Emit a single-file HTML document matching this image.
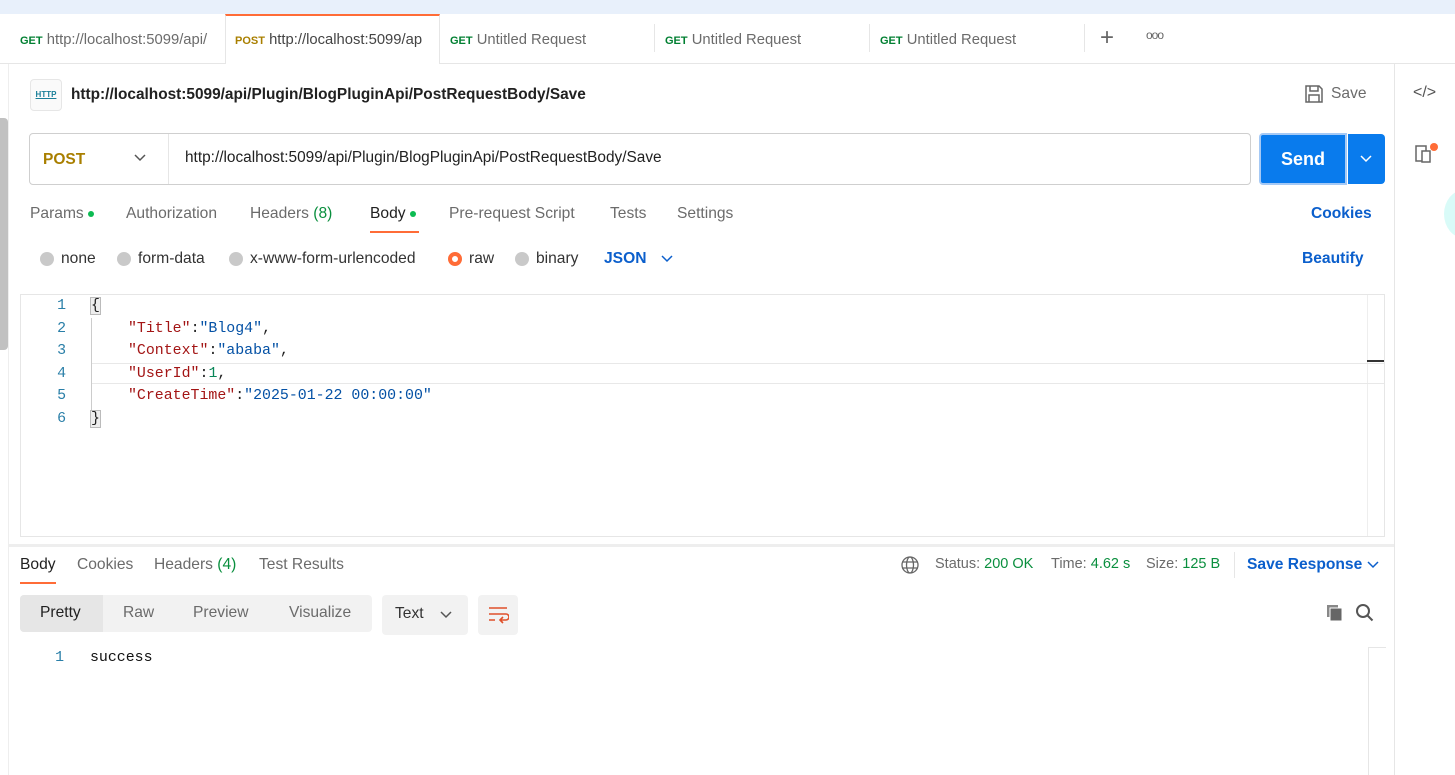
<!DOCTYPE html>
<html><head><style>
*{margin:0;padding:0;box-sizing:border-box}
body{width:1455px;height:775px;overflow:hidden;background:#fff;font-family:"Liberation Sans",sans-serif;font-size:14.5px;color:#212121;position:relative}
.a{position:absolute;white-space:nowrap}
.g{color:#6b6b6b}
.t{font-size:15.6px}
.mono{font-family:"Liberation Mono",monospace;font-size:14.9px}
.ln{color:#2a7fa8;width:20px;text-align:right}
.k{color:#a31515}.s{color:#0451a5}
.dot{display:inline-block;width:6px;height:6px;border-radius:50%;background:#0cbb52;margin-left:4px;vertical-align:middle}
.rad{position:absolute;width:14px;height:14px;border-radius:50%;background:#c9c9c9;top:252px}
</style></head><body>
<div class="a" style="left:0;top:0;width:1455px;height:14px;background:#e8f0fb"></div>
<div class="a" style="left:0;top:14px;width:1455px;height:50px;border-bottom:1px solid #e6e6e6"></div>
<div class="a" style="left:225px;top:14px;width:215px;height:50px;background:#fff;border-top:2px solid #ff6c37;border-left:1px solid #e6e6e6;border-right:1px solid #e6e6e6"></div>
<div class="a" style="left:20px;top:32px;font-size:14.8px"><span style="color:#007f31;font-size:11px;font-weight:bold">GET</span> <span class="g">http://localhost:5099/api/</span></div>
<div class="a" style="left:235px;top:32px;font-size:14.8px"><span style="color:#a97f00;font-size:11px;font-weight:bold">POST</span> <span style="color:#444">http://localhost:5099/ap</span></div>
<div class="a" style="left:450px;top:32px;font-size:14.8px"><span style="color:#007f31;font-size:11px;font-weight:bold">GET</span> <span class="g">Untitled Request</span></div>
<div class="a" style="left:654px;top:24px;width:1px;height:28px;background:#e6e6e6"></div>
<div class="a" style="left:665px;top:32px;font-size:14.8px"><span style="color:#007f31;font-size:11px;font-weight:bold">GET</span> <span class="g">Untitled Request</span></div>
<div class="a" style="left:869px;top:24px;width:1px;height:28px;background:#e6e6e6"></div>
<div class="a" style="left:880px;top:32px;font-size:14.8px"><span style="color:#007f31;font-size:11px;font-weight:bold">GET</span> <span class="g">Untitled Request</span></div>
<div class="a" style="left:1084px;top:24px;width:1px;height:28px;background:#e6e6e6"></div>
<div class="a" style="left:1100px;top:24px;font-size:24px;color:#666;line-height:28px">+</div>
<div class="a" style="left:1146px;top:28px;font-size:12px;color:#666;letter-spacing:-1px">ooo</div>
<div class="a" style="left:0;top:64px;width:9px;height:711px;border-right:1px solid #eee"></div>
<div class="a" style="left:0;top:118px;width:8px;height:232px;background:#c1c1c1;border-radius:0 4px 4px 0"></div>
<div class="a" style="left:1394px;top:64px;width:1px;height:711px;background:#e6e6e6"></div>
<div class="a" style="left:1413px;top:84px;color:#555;font-size:16px">&lt;/&gt;</div>
<svg class="a" style="left:1414px;top:143px" width="24" height="22"><rect x="2" y="3" width="10" height="15" fill="none" stroke="#666" stroke-width="1.5"/><rect x="8" y="8" width="8" height="11" fill="#fff" stroke="#666" stroke-width="1.5"/><circle cx="20" cy="4" r="4" fill="#ff6c37"/></svg>
<div class="a" style="left:1444px;top:190px;width:40px;height:48px;border-radius:50%;background:#d9fbf8"></div>
<div class="a" style="left:30px;top:79px;width:32px;height:32px;border:1px solid #e6e6e6;border-radius:4px;background:#fafafa;color:#1a7f99;font-size:8px;font-weight:bold;text-align:center;line-height:30px;text-decoration:underline">HTTP</div>
<div class="a" style="left:71px;top:86px;font-size:15.4px;font-weight:bold;color:#212121">http://localhost:5099/api/Plugin/BlogPluginApi/PostRequestBody/Save</div>
<svg class="a" style="left:1304px;top:84px" width="20" height="20"><path d="M2 2h13l3 3v13H2z M6 2v5h8V2 M5 18v-7h10v7" fill="none" stroke="#666" stroke-width="1.5"/></svg>
<div class="a g t" style="left:1331px;top:85px">Save</div>
<div class="a" style="left:29px;top:133px;width:1222px;height:52px;border:1px solid #cfcfcf;border-radius:4px"></div>
<div class="a" style="left:168px;top:134px;width:1px;height:50px;background:#e6e6e6"></div>
<div class="a" style="left:43px;top:151px;font-size:15.5px;font-weight:bold;color:#a97f00">POST</div>
<svg class="a" style="left:134px;top:154px" width="12" height="8"><path d="M1 1l5 5 5-5" fill="none" stroke="#555" stroke-width="1.5"/></svg>
<div class="a" style="left:185px;top:149px;font-size:15.4px;color:#212121">http://localhost:5099/api/Plugin/BlogPluginApi/PostRequestBody/Save</div>
<div class="a" style="left:1259px;top:133px;width:88px;height:52px;background:#097bed;border:2px solid #a5c9f5;border-radius:4px 0 0 4px;color:#fff;font-weight:bold;font-size:18px;text-align:center;line-height:48px">Send</div>
<div class="a" style="left:1348px;top:134px;width:37px;height:50px;background:#097bed;border-radius:0 4px 4px 0"></div>
<svg class="a" style="left:1360px;top:155px" width="12" height="8"><path d="M1 1l5 5 5-5" fill="none" stroke="#fff" stroke-width="1.5"/></svg>
<div class="a g t" style="left:30px;top:205px">Params<span class="dot"></span></div>
<div class="a g t" style="left:126px;top:205px">Authorization</div>
<div class="a g t" style="left:250px;top:205px">Headers <span style="color:#0a8f3e">(8)</span></div>
<div class="a t" style="left:370px;top:205px;color:#212121">Body<span class="dot"></span></div>
<div class="a" style="left:370px;top:231px;width:49px;height:2px;background:#ff6c37"></div>
<div class="a g t" style="left:449px;top:205px">Pre-request Script</div>
<div class="a g t" style="left:610px;top:205px">Tests</div>
<div class="a g t" style="left:677px;top:205px">Settings</div>
<div class="a t" style="left:1311px;top:205px;font-weight:bold;color:#0b5fcc">Cookies</div>
<div class="rad" style="left:40px"></div><div class="a t" style="left:61px;top:250px;color:#333">none</div>
<div class="rad" style="left:117px"></div><div class="a t" style="left:138px;top:250px;color:#333">form-data</div>
<div class="rad" style="left:229px"></div><div class="a t" style="left:250px;top:250px;color:#333">x-www-form-urlencoded</div>
<div class="rad" style="left:448px;background:#fff;border:4px solid #ff6c37"></div><div class="a t" style="left:469px;top:250px;color:#333">raw</div>
<div class="rad" style="left:515px"></div><div class="a t" style="left:536px;top:250px;color:#333">binary</div>
<div class="a t" style="left:604px;top:250px;font-weight:bold;color:#0b5fcc">JSON</div>
<svg class="a" style="left:661px;top:255px" width="12" height="8"><path d="M1 1l5 5 5-5" fill="none" stroke="#0b5fcc" stroke-width="1.5"/></svg>
<div class="a t" style="left:1302px;top:250px;font-weight:bold;color:#0b5fcc">Beautify</div>
<div class="a" style="left:20px;top:294px;width:1365px;height:243px;border:1px solid #e6e6e6"></div>
<div class="a" style="left:1367px;top:295px;width:1px;height:241px;background:#eee"></div>
<div class="a" style="left:1367px;top:360px;width:17px;height:2px;background:#333"></div>
<div class="a" style="left:91px;top:363px;width:1293px;height:21px;border-top:1px solid #e8e8e8;border-bottom:1px solid #e8e8e8"></div>
<div class="a" style="left:91px;top:318px;width:1px;height:92px;background:#ccc"></div>
<div class="a mono ln" style="left:46px;top:298px">1</div>
<div class="a mono ln" style="left:46px;top:321px">2</div>
<div class="a mono ln" style="left:46px;top:343px">3</div>
<div class="a mono ln" style="left:46px;top:366px">4</div>
<div class="a mono ln" style="left:46px;top:388px">5</div>
<div class="a mono ln" style="left:46px;top:411px">6</div>
<div class="a mono" style="left:91px;top:298px;background:#eee;outline:1px solid #bbb">{</div>
<div class="a mono" style="left:128px;top:321px"><span class="k">"Title"</span>:<span class="s">"Blog4"</span>,</div>
<div class="a mono" style="left:128px;top:343px"><span class="k">"Context"</span>:<span class="s">"ababa"</span>,</div>
<div class="a mono" style="left:128px;top:366px"><span class="k">"UserId"</span>:<span style="color:#098658">1</span>,</div>
<div class="a mono" style="left:128px;top:388px"><span class="k">"CreateTime"</span>:<span class="s">"2025-01-22 00:00:00"</span></div>
<div class="a mono" style="left:91px;top:411px;background:#eee;outline:1px solid #bbb">}</div>
<div class="a" style="left:9px;top:544px;width:1385px;height:3px;background:#eee"></div>
<div class="a t" style="left:20px;top:556px;color:#212121">Body</div>
<div class="a" style="left:20px;top:582px;width:36px;height:2px;background:#ff6c37"></div>
<div class="a g t" style="left:77px;top:556px">Cookies</div>
<div class="a g t" style="left:154px;top:556px">Headers <span style="color:#0a8f3e">(4)</span></div>
<div class="a g t" style="left:259px;top:556px">Test Results</div>
<svg class="a" style="left:900px;top:555px" width="20" height="20"><circle cx="10" cy="10" r="8" fill="none" stroke="#666" stroke-width="1.3"/><ellipse cx="10" cy="10" rx="3.5" ry="8" fill="none" stroke="#666" stroke-width="1.3"/><path d="M2 7h16M2 13h16" stroke="#666" stroke-width="1.3"/></svg>
<div class="a g" style="left:935px;top:556px">Status: <span style="color:#0a8f3e">200 OK</span></div>
<div class="a g" style="left:1051px;top:556px">Time: <span style="color:#0a8f3e">4.62 s</span></div>
<div class="a g" style="left:1146px;top:556px">Size: <span style="color:#0a8f3e">125 B</span></div>
<div class="a" style="left:1234px;top:552px;width:1px;height:26px;background:#e6e6e6"></div>
<div class="a t" style="left:1247px;top:556px;font-weight:bold;color:#0b5fcc">Save Response</div>
<svg class="a" style="left:1367px;top:561px" width="12" height="8"><path d="M1 1l5 5 5-5" fill="none" stroke="#0b5fcc" stroke-width="1.5"/></svg>
<div class="a" style="left:20px;top:595px;width:352px;height:37px;background:#f2f2f2;border-radius:4px"></div>
<div class="a" style="left:20px;top:595px;width:83px;height:37px;background:#e6e6e6;border-radius:4px 0 0 4px"></div>
<div class="a t" style="left:40px;top:604px;color:#212121">Pretty</div>
<div class="a g t" style="left:123px;top:604px">Raw</div>
<div class="a g t" style="left:193px;top:604px">Preview</div>
<div class="a g t" style="left:289px;top:604px">Visualize</div>
<div class="a" style="left:382px;top:595px;width:86px;height:40px;background:#f2f2f2;border-radius:4px"></div>
<div class="a t" style="left:395px;top:605px;color:#333">Text</div>
<svg class="a" style="left:440px;top:611px" width="12" height="8"><path d="M1 1l5 5 5-5" fill="none" stroke="#555" stroke-width="1.5"/></svg>
<div class="a" style="left:478px;top:595px;width:40px;height:40px;background:#f2f2f2;border-radius:4px"></div>
<svg class="a" style="left:487px;top:604px" width="22" height="22"><path d="M2 4h18M2 10h17a3 3 0 0 1 0 6h-6M16 13l-3 3 3 3M2 16h6" fill="none" stroke="#e0502a" stroke-width="1.6"/></svg>
<svg class="a" style="left:1325px;top:603px" width="20" height="20"><rect x="2" y="2" width="11" height="12" fill="#888"/><rect x="5" y="5" width="12" height="13" fill="#666" stroke="#fff" stroke-width="1"/></svg>
<svg class="a" style="left:1355px;top:603px" width="20" height="20"><circle cx="8" cy="8" r="6" fill="none" stroke="#555" stroke-width="2"/><path d="M12.5 12.5l5 5" stroke="#555" stroke-width="2"/></svg>
<div class="a mono ln" style="left:44px;top:650px">1</div>
<div class="a mono" style="left:90px;top:650px;color:#111">success</div>
<div class="a" style="left:1368px;top:647px;width:1px;height:128px;background:#e6e6e6"></div>
<div class="a" style="left:1368px;top:647px;width:18px;height:1px;background:#e6e6e6"></div>
</body></html>
